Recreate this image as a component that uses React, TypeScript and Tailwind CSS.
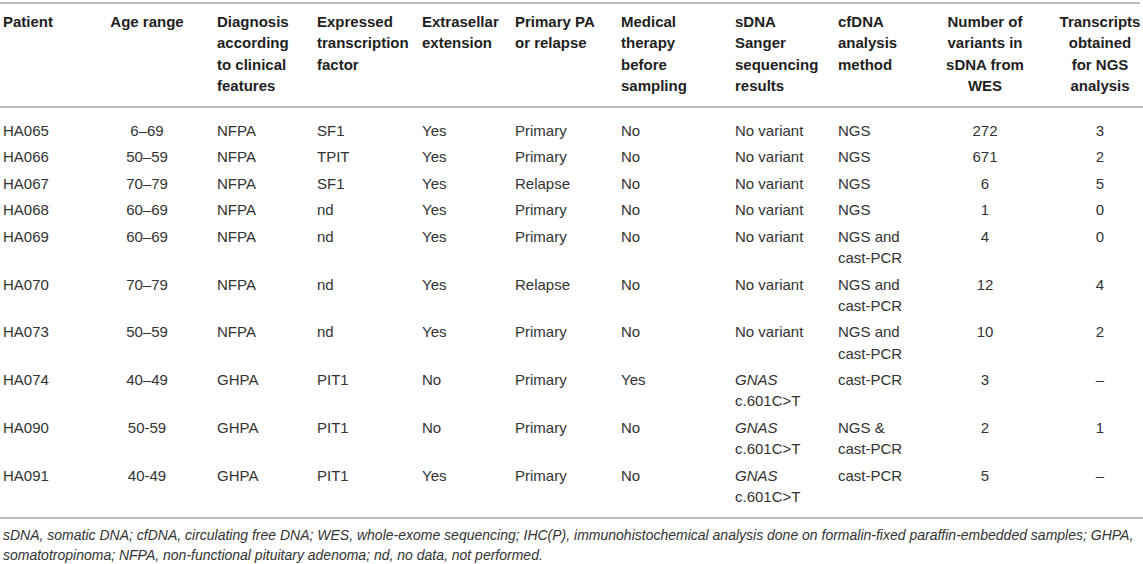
import React from 'react';

type Row = {
  patient: string;
  age: string;
  diagnosis: string;
  factor: string;
  extrasellar: string;
  primary: string;
  therapy: string;
  sanger: React.ReactNode;
  method: React.ReactNode;
  variants: string;
  transcripts: string;
};

const gnas = (
  <>
    <span className="italic">GNAS</span>
    <br />
    c.601C&gt;T
  </>
);

const rows: Row[] = [
  { patient: 'HA065', age: '6\u201369', diagnosis: 'NFPA', factor: 'SF1', extrasellar: 'Yes', primary: 'Primary', therapy: 'No', sanger: 'No variant', method: 'NGS', variants: '272', transcripts: '3' },
  { patient: 'HA066', age: '50\u201359', diagnosis: 'NFPA', factor: 'TPIT', extrasellar: 'Yes', primary: 'Primary', therapy: 'No', sanger: 'No variant', method: 'NGS', variants: '671', transcripts: '2' },
  { patient: 'HA067', age: '70\u201379', diagnosis: 'NFPA', factor: 'SF1', extrasellar: 'Yes', primary: 'Relapse', therapy: 'No', sanger: 'No variant', method: 'NGS', variants: '6', transcripts: '5' },
  { patient: 'HA068', age: '60\u201369', diagnosis: 'NFPA', factor: 'nd', extrasellar: 'Yes', primary: 'Primary', therapy: 'No', sanger: 'No variant', method: 'NGS', variants: '1', transcripts: '0' },
  { patient: 'HA069', age: '60\u201369', diagnosis: 'NFPA', factor: 'nd', extrasellar: 'Yes', primary: 'Primary', therapy: 'No', sanger: 'No variant', method: <>NGS and<br />cast-PCR</>, variants: '4', transcripts: '0' },
  { patient: 'HA070', age: '70\u201379', diagnosis: 'NFPA', factor: 'nd', extrasellar: 'Yes', primary: 'Relapse', therapy: 'No', sanger: 'No variant', method: <>NGS and<br />cast-PCR</>, variants: '12', transcripts: '4' },
  { patient: 'HA073', age: '50\u201359', diagnosis: 'NFPA', factor: 'nd', extrasellar: 'Yes', primary: 'Primary', therapy: 'No', sanger: 'No variant', method: <>NGS and<br />cast-PCR</>, variants: '10', transcripts: '2' },
  { patient: 'HA074', age: '40\u201349', diagnosis: 'GHPA', factor: 'PIT1', extrasellar: 'No', primary: 'Primary', therapy: 'Yes', sanger: gnas, method: 'cast-PCR', variants: '3', transcripts: '\u2013' },
  { patient: 'HA090', age: '50-59', diagnosis: 'GHPA', factor: 'PIT1', extrasellar: 'No', primary: 'Primary', therapy: 'No', sanger: gnas, method: <>NGS &amp;<br />cast-PCR</>, variants: '2', transcripts: '1' },
  { patient: 'HA091', age: '40-49', diagnosis: 'GHPA', factor: 'PIT1', extrasellar: 'Yes', primary: 'Primary', therapy: 'No', sanger: gnas, method: 'cast-PCR', variants: '5', transcripts: '\u2013' },
];

// per-column padding / alignment, shared by header and body
const colCls = [
  'pl-[3px] text-left',
  'pr-[26px] text-center',
  'pl-[3px] pr-[10px] text-left',
  'pl-[2px] text-left',
  'pl-[3px] text-left',
  'pl-[3px] pr-[10px] text-left',
  'pl-[2px] pr-[10px] text-left',
  'pl-[4px] pr-[10px] text-left',
  'pl-[3px] text-left',
  'pl-[2px] pr-[4px] text-center',
  'pl-[26px] pr-[1px] text-center',
];

const colWidths = ['w-[106px]', 'w-[108px]', 'w-[101px]', 'w-[104px]', 'w-[93px]', 'w-[107px]', 'w-[112px]', 'w-[104px]', 'w-[105px]', 'w-[92px]', 'w-[111px]'];

const headers = [
  'Patient',
  'Age range',
  'Diagnosis according to clinical features',
  'Expressed transcription factor',
  'Extrasellar extension',
  'Primary PA or relapse',
  'Medical therapy before sampling',
  'sDNA Sanger sequencing results',
  'cfDNA analysis method',
  'Number of variants in sDNA from WES',
  'Transcripts obtained for NGS analysis',
];

export default function App() {
  return (
    <div className="w-[1143px] h-[564px] overflow-hidden bg-white pt-[2px] font-['Liberation_Sans',Arial,sans-serif]">
      <div className="h-[2px] w-[1140px] bg-[#bdbdbd]" />
      <table className="w-[1143px] table-fixed border-collapse text-[15px] leading-[21.3px]">
        <colgroup>
          {colWidths.map((w, i) => (
            <col key={i} className={w} />
          ))}
        </colgroup>
        <thead>
          <tr>
            {headers.map((h, i) => (
              <th
                key={i}
                className={`${colCls[i]} border-b-2 border-[#bdbdbd] align-top pt-[7px] pb-[10px] font-bold text-[#1e1e1e]`}
              >
                {h}
              </th>
            ))}
          </tr>
        </thead>
        <tbody className="text-[#333333]">
          {rows.map((r, ri) => {
            const first = ri === 0;
            const last = ri === rows.length - 1;
            const pad = first
              ? 'pt-[11.6px] pb-[2.6px]'
              : last
                ? 'pt-[2.6px] pb-[9.6px] border-b-2 border-[#bdbdbd]'
                : 'py-[2.6px]';
            const cells = [r.patient, r.age, r.diagnosis, r.factor, r.extrasellar, r.primary, r.therapy, r.sanger, r.method, r.variants, r.transcripts];
            return (
              <tr key={r.patient}>
                {cells.map((c, ci) => (
                  <td key={ci} className={`${colCls[ci]} ${pad} align-top`}>
                    {c}
                  </td>
                ))}
              </tr>
            );
          })}
        </tbody>
      </table>
      <p className="mt-[6.5px] pl-[3px] text-[14px] leading-[20px] italic text-[#333333]">
        sDNA, somatic DNA; cfDNA, circulating free DNA; WES, whole-exome sequencing; IHC(P), immunohistochemical analysis done on formalin-fixed paraffin-embedded samples; GHPA,
        <br />
        somatotropinoma; NFPA, non-functional pituitary adenoma; nd, no data, not performed.
      </p>
    </div>
  );
}
